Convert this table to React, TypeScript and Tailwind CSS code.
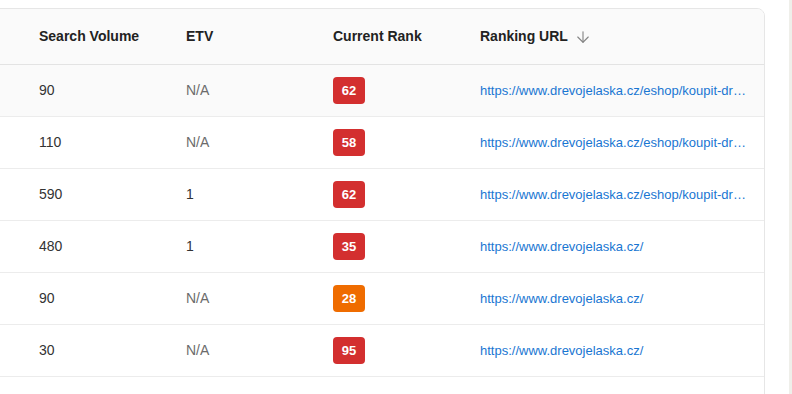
import React from "react";
import { ArrowDown } from "lucide-react";

type Row = { kw: string; vol: string; etv: string; rank: number; color: "red" | "orange"; url: string };

const long = "https://www.drevojelaska.cz/eshop/koupit-drevo-na-topeni/";
const short = "https://www.drevojelaska.cz/";

const rows: Row[] = [
  { kw: "palivové dřevo", vol: "90", etv: "N/A", rank: 62, color: "red", url: long },
  { kw: "dřevo na topení", vol: "110", etv: "N/A", rank: 58, color: "red", url: long },
  { kw: "koupit dřevo", vol: "590", etv: "1", rank: 62, color: "red", url: long },
  { kw: "dřevo jelaška", vol: "480", etv: "1", rank: 35, color: "red", url: short },
  { kw: "štípané dřevo", vol: "90", etv: "N/A", rank: 28, color: "orange", url: short },
  { kw: "suché dřevo", vol: "30", etv: "N/A", rank: 95, color: "red", url: short },
];

export default function App() {
  return (
    <div
      className="relative w-[792px] h-[394px] overflow-hidden bg-white"
      style={{ fontFamily: '"Liberation Sans", Arial, sans-serif' }}
    >
      <div className="absolute right-0 top-0 w-[3px] h-full bg-[#efefea]" />
      <div className="pt-2">
        <div className="ml-[-198px] w-[963px] h-[420px] border border-[#e6e6e6] rounded-t-lg overflow-hidden">
          <div className="flex h-[56px] items-center bg-[#fafafa] border-b border-[#e3e3e3] text-[14px] font-bold text-[#222]">
            <div className="w-[220px] pl-4">Keyword</div>
            <div className="w-[147px] pl-4">Search Volume</div>
            <div className="w-[147px] pl-4">ETV</div>
            <div className="w-[147px] pl-4">Current Rank</div>
            <div className="w-[300px] pl-4 flex items-center gap-[6px]">
              Ranking URL
              <ArrowDown size={18} strokeWidth={1.5} className="text-[#858585]" />
            </div>
          </div>
          {rows.map((r, i) => (
            <div
              key={i}
              className={`flex h-[52px] items-center border-b border-[#ececec] text-[14px] ${i === 0 ? "bg-[#fafafa]" : "bg-white"}`}
            >
              <div className="w-[220px] pl-4 text-[#333]">{r.kw}</div>
              <div className="w-[147px] pl-4 text-[#333]">{r.vol}</div>
              <div className={`w-[147px] pl-4 ${r.etv === "N/A" ? "text-[#6b6b6b]" : "text-[#333]"}`}>{r.etv}</div>
              <div className="w-[147px] pl-4">
                <span
                  className={`inline-flex items-center justify-center w-[32px] h-[27px] rounded-[4px] text-white text-[13px] font-bold ${r.color === "red" ? "bg-[#d32f2f]" : "bg-[#ef6c00]"}`}
                >
                  {r.rank}
                </span>
              </div>
              <div className="w-[300px] pl-4 pr-4 min-w-0">
                <div className="truncate text-[13px] text-[#1976d2]">{r.url}</div>
              </div>
            </div>
          ))}
        </div>
      </div>
    </div>
  );
}
